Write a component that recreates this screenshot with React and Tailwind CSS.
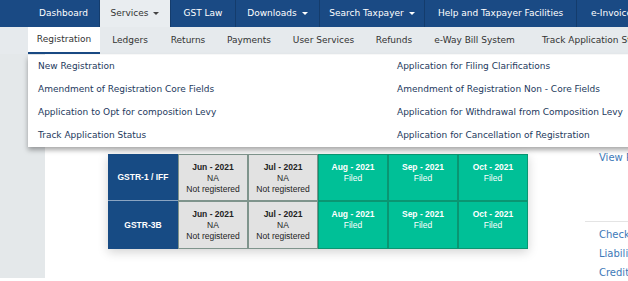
import React from 'react'

const NAV = [
  { label: 'Dashboard', w: 'w-[72px]' },
  { label: 'Services', w: 'w-[71px]', caret: true, active: true },
  { label: 'GST Law', w: 'w-[65px]' },
  { label: 'Downloads', w: 'w-[84px]', caret: true },
  { label: 'Search Taxpayer', w: 'w-[105px]', caret: true },
  { label: 'Help and Taxpayer Facilities', w: 'w-[152px]' },
  { label: 'e-Invoice', w: 'w-[70px]' },
]

const SUB = [
  { label: 'Registration', w: 'w-[72px]', active: true },
  { label: 'Ledgers', w: 'w-[60px]' },
  { label: 'Returns', w: 'w-[56px]' },
  { label: 'Payments', w: 'w-[66px]' },
  { label: 'User Services', w: 'w-[83px]' },
  { label: 'Refunds', w: 'w-[58px]' },
  { label: 'e-Way Bill System', w: 'w-[103px]' },
  { label: 'Track Application Status', w: 'w-[140px]' },
]

const LEFT_ITEMS = [
  'New Registration',
  'Amendment of Registration Core Fields',
  'Application to Opt for composition Levy',
  'Track Application Status',
]

const RIGHT_ITEMS = [
  'Application for Filing Clarifications',
  'Amendment of Registration Non - Core Fields',
  'Application for Withdrawal from Composition Levy',
  'Application for Cancellation of Registration',
]

const ROWS = ['GSTR-1 / IFF', 'GSTR-3B']
const MONTHS = [
  { m: 'Jun - 2021', filed: false },
  { m: 'Jul - 2021', filed: false },
  { m: 'Aug - 2021', filed: true },
  { m: 'Sep - 2021', filed: true },
  { m: 'Oct - 2021', filed: true },
]

function Caret({ dark }) {
  return (
    <span
      className={`ml-[5px] inline-block w-0 h-0 border-l-[3px] border-r-[3px] border-t-[3px] border-l-transparent border-r-transparent ${dark ? 'border-t-[#444]' : 'border-t-white'}`}
    />
  )
}

export default function App() {
  return (
    <div className="relative w-[628px] h-[281px] overflow-hidden bg-white font-['DejaVu_Sans',sans-serif] text-[9px]">
      {/* top nav */}
      <div className="flex h-[27px] bg-[#1a4a84] pl-[28px]">
        {NAV.map((n) => (
          <div
            key={n.label}
            className={`${n.w} shrink-0 flex items-center justify-center whitespace-nowrap border-r border-[#143c6c] ${n.active ? 'bg-[#e9edf0] text-[#333]' : 'text-white'}`}
          >
            {n.label}
            {n.caret && <Caret dark={n.active} />}
          </div>
        ))}
      </div>

      {/* sub nav */}
      <div className="flex h-[27px] bg-[#e6eaed] pl-[28px]">
        {SUB.map((s) => (
          <div
            key={s.label}
            className={`${s.w} shrink-0 flex items-center justify-center whitespace-nowrap text-[#333] ${s.active ? 'bg-white border-b-2 border-[#1a4a84]' : ''}`}
          >
            {s.label}
          </div>
        ))}
      </div>

      {/* body */}
      <div className="flex h-[227px]">
        <div className="w-[45px] h-[224px] shrink-0 bg-[#e4e8ea]" />
        <div className="flex-1 flex pt-[100px]">
          <div className="ml-[63px] w-[420px] shrink-0 self-start shadow-[0_3px_10px_rgba(0,0,0,0.18)] font-['Liberation_Sans',sans-serif]">
            {ROWS.map((r, ri) => (
              <div key={r} className={`flex ${ri === 0 ? 'h-[47px]' : 'h-[48px]'}`}>
                <div className={`w-[70px] shrink-0 flex items-center justify-center bg-[#174b84] text-white font-bold text-[8.5px] ${ri === 0 ? 'border-b border-[#8ba5c2]' : ''}`}>
                  {r}
                </div>
                {MONTHS.map((c) => (
                  <div
                    key={c.m}
                    className={`w-[70px] shrink-0 flex flex-col items-center pt-[7px] leading-[11px] text-[8.5px] border ${c.filed ? 'bg-[#00c097] text-white border-[#0a9672]' : 'bg-[#e2e2e2] text-[#222] border-[#7f948c]'}`}
                  >
                    <span className="font-bold">{c.m}</span>
                    <span>{c.filed ? 'Filed' : 'NA'}</span>
                    {!c.filed && <span>Not registered</span>}
                  </div>
                ))}
              </div>
            ))}
          </div>
          <div className="ml-[57px] flex-1 flex flex-col whitespace-nowrap text-[10px] text-[#3d79b8]">
            <div className="pl-[14px] mt-[-2px] leading-[12px]">View Profile</div>
            <div className="mt-[57px] h-px bg-[#e4e4e4]" />
            <div className="pl-[14px] mt-[7px] leading-[12px]">Check Credit</div>
            <div className="pl-[14px] mt-[7px] leading-[12px]">Liability</div>
            <div className="pl-[14px] mt-[7px] leading-[12px]">Credit</div>
          </div>
        </div>
      </div>

      {/* services dropdown overlay */}
      <div className="absolute left-[28px] top-[55px] w-[620px] h-[92px] bg-white shadow-[0_3px_5px_rgba(0,0,0,0.35)] flex text-[#23395d]">
        <div className="w-[369px] shrink-0 pl-[10px] flex flex-col">
          {LEFT_ITEMS.map((t) => (
            <div key={t} className="h-[23px] shrink-0 flex items-center whitespace-nowrap">{t}</div>
          ))}
        </div>
        <div className="flex flex-col">
          {RIGHT_ITEMS.map((t) => (
            <div key={t} className="h-[23px] shrink-0 flex items-center whitespace-nowrap">{t}</div>
          ))}
        </div>
      </div>
    </div>
  )
}
